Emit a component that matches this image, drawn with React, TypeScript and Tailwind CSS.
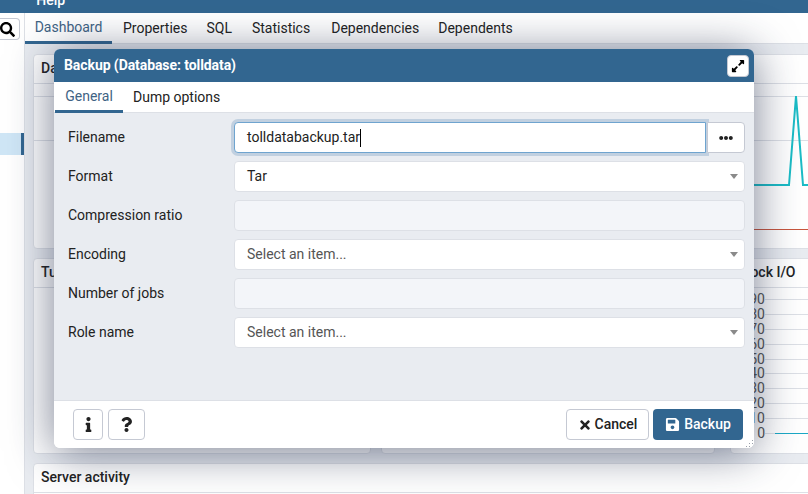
import React from "react";
import { FaSearch, FaInfo, FaQuestion, FaTimes, FaSave, FaEllipsisH, FaExpandAlt } from "react-icons/fa";

const Arrow = () => (
  <svg width="8" height="5" viewBox="0 0 8 5" className="shrink-0"><path d="M0 0h8L4 5z" fill="#8a8a8a" /></svg>
);

function Row({ label, children }: { label: string; children: React.ReactNode }) {
  return (
    <div className="flex items-center h-[31px] mb-2">
      <div className="w-[168px] pl-[2px] text-[14px] text-[#222222]">{label}</div>
      <div className="flex-1 min-w-0 flex">{children}</div>
    </div>
  );
}

function Select({ text, muted }: { text: string; muted?: boolean }) {
  return (
    <div className={`flex-1 h-[31px] bg-white border border-[#dde0e6] rounded-[4px] flex items-center justify-between pl-3 pr-[6px] text-[14px] ${muted ? "text-[#555]" : "text-[#222222]"}`}>
      <span>{text}</span>
      <Arrow />
    </div>
  );
}

const Disabled = () => <div className="flex-1 h-[31px] bg-[#f3f5f9] border border-[#dde0e6] rounded-[4px]" />;

function Card({ title, className, children }: { title: string; className?: string; children?: React.ReactNode }) {
  return (
    <div className={`bg-white border border-[#dde0e6] rounded-[4px] flex flex-col overflow-hidden ${className ?? ""}`}>
      <div className="h-[29px] shrink-0 border-b border-[#dde0e6] pl-[7px] pb-[2px] flex items-center text-[14px] font-medium text-[#222222]">{title}</div>
      {children}
    </div>
  );
}

const yLabels = [90, 80, 70, 60, 50, 40, 30, 20, 10, 0];

export default function App() {
  return (
    <div className="relative w-[808px] h-[494px] overflow-hidden bg-white flex flex-col font-['Roboto',sans-serif]">
      <div className="h-[13px] shrink-0 bg-[#326690] flex items-end text-[14px] text-white font-medium leading-[13px] overflow-hidden">
        <span className="ml-[-23px] translate-y-[-6px]">File</span>
        <span className="ml-[37px] translate-y-[-6px]">Help</span>
      </div>
      <div className="flex-1 flex min-h-0">
        <aside className="w-[25px] shrink-0 bg-white border-r border-[#dde0e6] flex flex-col">
          <div className="h-[22px] w-[20px] mt-[5px] bg-white border border-[#c5c9d3] border-l-0 rounded-r-[4px] flex items-center justify-end pr-[4px]">
            <FaSearch className="text-[15px] text-black" />
          </div>
          <div className="mt-[93px] h-[22px] w-[24px] bg-[#cfe6f6] border-r-[3px] border-[#326690]" />
        </aside>
        <main className="flex-1 min-w-0 flex flex-col bg-[#e9ecf1]">
          <nav className="h-[31px] shrink-0 bg-white border-b border-[#dde0e6] flex text-[14px] text-[#222222]">
            <div className="w-[87px] h-[31px] flex items-center justify-center border-b-[3px] border-[#326690] text-[#3f6384]">Dashboard</div>
            <div className="ml-[11px] flex items-center h-[30px]">Properties</div>
            <div className="ml-[19px] flex items-center h-[30px]">SQL</div>
            <div className="ml-[20px] flex items-center h-[30px]">Statistics</div>
            <div className="ml-[21px] flex items-center h-[30px]">Dependencies</div>
            <div className="ml-[19px] flex items-center h-[30px]">Dependents</div>
          </nav>
          <div className="flex-1 min-h-0 pl-2 pt-[10px] flex flex-col gap-[9px] w-[820px]">
            <Card title="Database sessions" className="h-[195px] shrink-0">
              <div className="flex-1">
                <svg width="818" height="166" className="block">
                  <path d="M0 12.5H818M0 56.5H818" stroke="#dde0e6" fill="none" />
                  <path d="M700 101H755L762 12L769 101H818" stroke="#1bbcc6" strokeWidth="2" fill="none" />
                  <path d="M700 145.5H818" stroke="#c8553d" fill="none" />
                </svg>
              </div>
            </Card>
            <div className="h-[196px] shrink-0 flex gap-[10px]">
              <Card title="Tuples in" className="w-[338px]" />
              <Card title="Tuples out" className="w-[334px]" />
              <Card title="Block I/O" className="flex-1 ml-[5px]">
                <div className="flex-1 pt-[4px] pl-[4px]">
                  {yLabels.map((v) => (
                    <div key={v} className="h-[14.9px] flex items-center text-[14px] text-[#555555]">
                      <span className="w-[30px] text-right">{v}</span>
                      <span className="flex-1 h-px bg-[#dde0e6]">
                        {v === 0 && <span className="block h-px ml-[10px] bg-[#1ba9c6]" />}
                      </span>
                    </div>
                  ))}
                </div>
              </Card>
            </div>
            <Card title="Server activity" className="h-[60px] shrink-0" />
          </div>
        </main>
      </div>

      <div className="absolute left-[54px] top-[49px] w-[700px] h-[399px] rounded-[6px] bg-white flex flex-col overflow-hidden shadow-[0_4px_45px_rgba(30,40,70,0.6)]">
        <header className="h-[33px] shrink-0 bg-[#326690] flex items-center justify-between pl-[10px] pr-[5px]">
          <span className="text-[14px] font-bold text-white tracking-[-0.08px]">Backup (Database: tolldata)</span>
          <button className="w-[22px] h-[22px] bg-white rounded-[4px] border border-[#c5c9d3] flex items-center justify-center">
            <FaExpandAlt className="text-[14px] text-black" />
          </button>
        </header>
        <div className="h-[31px] shrink-0 bg-white border-b border-[#dde0e6] flex text-[14px] text-[#222222]">
          <div className="ml-px w-[68px] h-[31px] flex items-center justify-center border-b-[3px] border-[#326690] text-[#3f6384]">General</div>
          <div className="ml-[10px] h-[30px] flex items-center">Dump options</div>
        </div>
        <div className="flex-1 bg-[#e9ecf1] pt-[9px] pl-3 pr-[9px]">
          <Row label="Filename">
            <div className="flex-1 h-[31px] bg-white border border-[#6fa4cf] rounded-l-[4px] flex items-center pl-3 text-[14px] text-[#222222] shadow-[0_0_0_3px_#c1d0e0]">
              <span>tolldatabackup.tar</span>
              <span className="w-px h-[18px] bg-black" />
            </div>
            <button className="ml-px w-[38px] h-[31px] bg-white border border-[#c5c9d3] rounded-r-[4px] flex items-center justify-center">
              <FaEllipsisH className="text-[14px] text-[#222222]" />
            </button>
          </Row>
          <Row label="Format"><Select text="Tar" /></Row>
          <Row label="Compression ratio"><Disabled /></Row>
          <Row label="Encoding"><Select text="Select an item..." muted /></Row>
          <Row label="Number of jobs"><Disabled /></Row>
          <Row label="Role name"><Select text="Select an item..." muted /></Row>
        </div>
        <footer className="relative h-[48px] shrink-0 bg-white border-t border-[#dde0e6] flex items-center pl-[19px] pr-[11px]">
          <button className="w-[30px] h-[31px] border border-[#c5c9d3] rounded-[4px] flex items-center justify-center">
            <FaInfo className="text-[15px] text-[#222222]" />
          </button>
          <button className="ml-[5px] w-[37px] h-[31px] border border-[#c5c9d3] rounded-[4px] flex items-center justify-center">
            <FaQuestion className="text-[15px] text-[#222222]" />
          </button>
          <button className="ml-auto w-[83px] h-[31px] border border-[#c5c9d3] rounded-[4px] flex items-center justify-center gap-[3px] text-[14px] font-medium text-[#222222]">
            <FaTimes className="text-[14px]" /> Cancel
          </button>
          <button className="ml-[4px] w-[90px] h-[31px] bg-[#326690] rounded-[4px] flex items-center justify-center gap-[4px] text-[14px] font-medium text-white">
            <FaSave className="text-[15px]" /> Backup
          </button>
          <svg className="absolute right-0 bottom-0" width="9" height="9" viewBox="0 0 9 9">
            <path d="M7 1h1v1H7zM4 4h1v1H4zM7 4h1v1H7zM1 7h1v1H1zM4 7h1v1H4zM7 7h1v1H7z" fill="#9aa0aa" />
          </svg>
        </footer>
      </div>
    </div>
  );
}
